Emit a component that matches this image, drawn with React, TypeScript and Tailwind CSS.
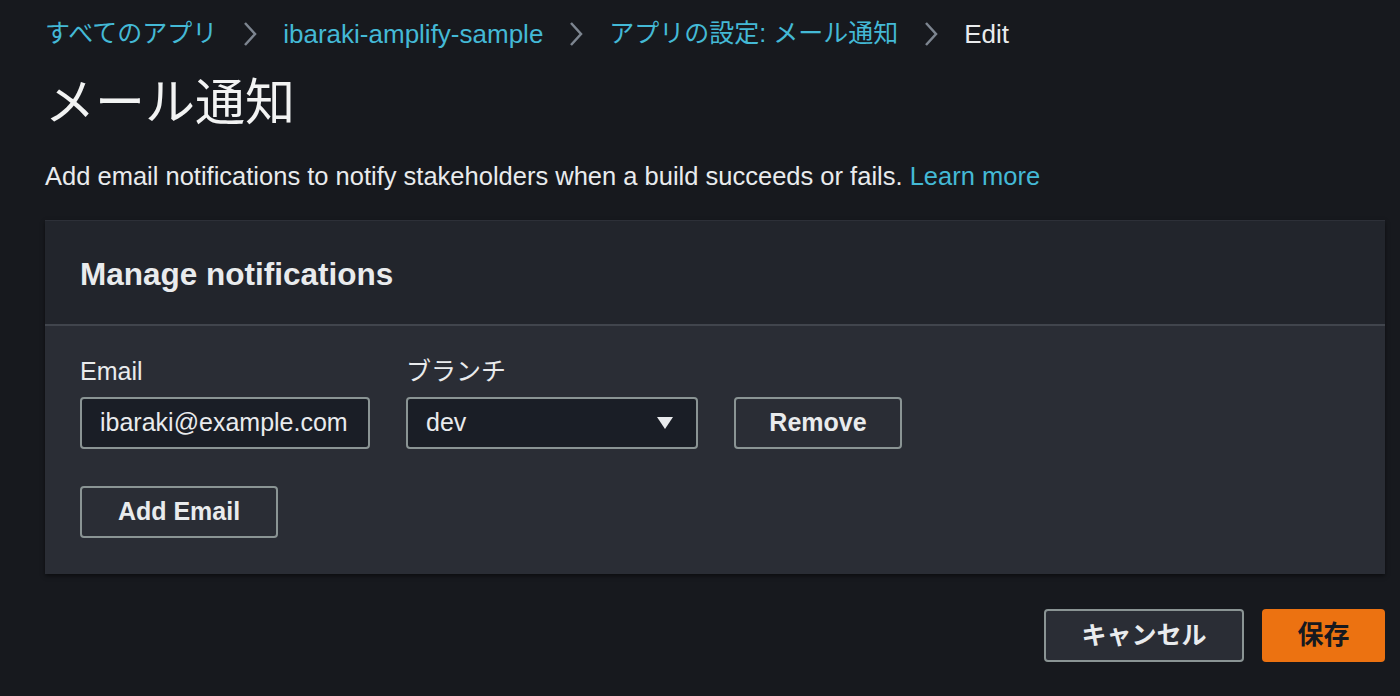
function Chevron() {
  return (
    <svg width="16" height="26" viewBox="0 0 16 26" className="mx-[25px]">
      <path d="M3 2 L13 13 L3 24" fill="none" stroke="#7d8590" strokeWidth="2.5" />
    </svg>
  );
}

export default function App() {
  return (
    <div
      className="min-h-screen w-full bg-[#17191e] text-[#e9ebed] pl-[45px] pr-[15px] pt-[14px]"
      style={{ fontFamily: '"Liberation Sans", "Noto Sans CJK JP", sans-serif' }}
    >
      <nav className="flex items-center h-[40px] text-[25px]">
        <a className="text-[#44b9d6]">すべてのアプリ</a>
        <Chevron />
        <a className="text-[#44b9d6] text-[26px]">ibaraki-amplify-sample</a>
        <Chevron />
        <a className="text-[#44b9d6]">アプリの設定: メール通知</a>
        <Chevron />
        <span className="text-[#e9ebed] text-[26px]">Edit</span>
      </nav>

      <h1 className="text-[50px] leading-[60px] mt-[19px] text-[#f2f3f3]">メール通知</h1>

      <p className="text-[25.5px] mt-[27px] leading-[32px]">
        Add email notifications to notify stakeholders when a build succeeds or fails.{" "}
        <a className="text-[#44b9d6]">Learn more</a>
      </p>

      <section className="mt-[28px] bg-[#2a2d35] shadow-[0_2px_4px_rgba(0,0,0,0.5)]">
        <div className="bg-[#22252c] h-[104px] px-[35px] pt-[4px] flex items-center border-t border-[#2d3038]">
          <h2 className="text-[31.5px] font-bold text-[#e9ebed]">Manage notifications</h2>
        </div>
        <div className="h-[2px] bg-[#41454d]" />
        <div className="px-[35px] pt-[30px] pb-[36px]">
          <div className="flex items-end gap-[36px]">
            <div className="flex flex-col">
              <label className="text-[25px] leading-[30px] mb-[11px]">Email</label>
              <div className="w-[290px] h-[52px] bg-[#1a1e26] border-2 border-[#8a9494] rounded-[4px] flex items-center px-[18px] text-[25px]">
                ibaraki@example.com
              </div>
            </div>
            <div className="flex flex-col">
              <label className="text-[25px] leading-[30px] mb-[11px]">ブランチ</label>
              <div className="w-[292px] h-[52px] bg-[#1a1e26] border-2 border-[#8a9494] rounded-[4px] flex items-center justify-between pl-[18px] pr-[22px] text-[25px]">
                <span>dev</span>
                <svg width="18" height="14" viewBox="0 0 18 14">
                  <path d="M1 1 L17 1 L9 13 Z" fill="#e9ebed" />
                </svg>
              </div>
            </div>
            <button className="w-[168px] h-[52px] border-2 border-[#8a9494] rounded-[4px] text-[25px] font-bold text-[#e9ebed]">
              Remove
            </button>
          </div>
          <button className="mt-[37px] w-[198px] h-[52px] border-2 border-[#8a9494] rounded-[4px] text-[25px] font-bold text-[#e9ebed]">
            Add Email
          </button>
        </div>
      </section>

      <div className="flex justify-end gap-[18px] mt-[35px]">
        <button className="w-[200px] h-[53px] border-2 border-[#8a9494] bg-[#2a2d35] rounded-[4px] text-[25px] font-bold text-[#e9ebed]">
          キャンセル
        </button>
        <button className="w-[123px] h-[53px] bg-[#ec7211] rounded-[4px] text-[26px] font-bold text-[#16191f]">
          保存
        </button>
      </div>
    </div>
  );
}
